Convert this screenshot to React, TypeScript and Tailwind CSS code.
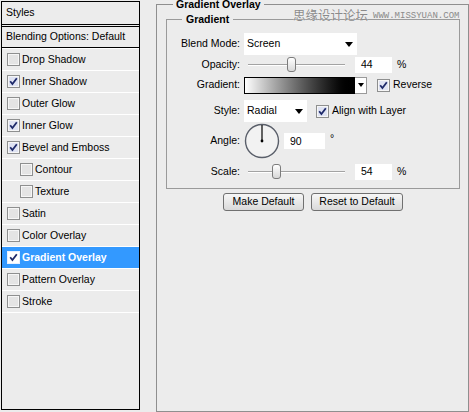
import React from "react";

const FONT = { fontFamily: '"Liberation Sans", Arial, sans-serif' };

interface BoxProps {
  checked?: boolean;
  active?: boolean;
}

function CheckBox({ checked, active }: BoxProps) {
  return (
    <svg width="13" height="13" viewBox="0 0 13 13" className="shrink-0">
      <rect x="0.5" y="0.5" width="12" height="12" fill={active ? "#ffffff" : "#f6f6f6"} stroke={active ? "#e8f0ff" : "#8e8f8f"} />
      <rect x="2" y="2" width="9" height="9" fill={active ? "#ffffff" : checked ? "#dfe3f3" : "#e4e4e4"} />
      {checked && <path d="M3.2 6.3 L5.4 9 L9.8 3.2" fill="none" stroke="#1e2a6b" strokeWidth="1.8" />}
    </svg>
  );
}

const items: { label: string; checked?: boolean; indent?: boolean; active?: boolean }[] = [
  { label: "Drop Shadow" },
  { label: "Inner Shadow", checked: true },
  { label: "Outer Glow" },
  { label: "Inner Glow", checked: true },
  { label: "Bevel and Emboss", checked: true },
  { label: "Contour", indent: true },
  { label: "Texture", indent: true },
  { label: "Satin" },
  { label: "Color Overlay" },
  { label: "Gradient Overlay", checked: true, active: true },
  { label: "Pattern Overlay" },
  { label: "Stroke" },
];

function Arrow() {
  return (
    <svg width="8" height="5" viewBox="0 0 8 5" className="shrink-0">
      <path d="M0 0 H8 L4 5 Z" fill="#000" />
    </svg>
  );
}

function Slider({ pos }: { pos: number }) {
  return (
    <div className="relative h-full w-[111px]">
      <div className="absolute left-[4px] right-[10px] top-[8px] h-[2px] border-t border-[#a3a3a3] border-b border-b-white" />
      <div
        className="absolute top-[1px] h-[15px] w-[9px] rounded-[3px] border border-[#7c7c7c] bg-gradient-to-b from-white to-[#d8d8d8]"
        style={{ left: pos }}
      />
    </div>
  );
}

function NumBox({ value, width = "w-[37px]" }: { value: string; width?: string }) {
  return <div className={`${width} flex h-[16px] items-center bg-white pl-[6px] pt-[1px]`}>{value}</div>;
}

function Row({ label, className, children }: { label: string; className: string; children: React.ReactNode }) {
  return (
    <div className={`flex items-center ${className}`}>
      <div className="w-[73px] text-right">{label}</div>
      <div className="ml-[4px] flex h-full items-center">{children}</div>
    </div>
  );
}

export default function App() {
  return (
    <div className="relative flex h-[412px] w-[469px] items-start overflow-hidden bg-[#ececec] text-[10.5px] text-black" style={FONT}>
      <div className="ml-[1px] mt-[1px] flex h-[409px] w-[139px] flex-col border border-black">
        <div className="flex h-[25px] items-center border-b-[3px] border-double border-black pl-[4px]">Styles</div>
        <div className="flex h-[21px] items-center border-b border-black pl-[4px]">Blending Options: Default</div>
        {items.map((it) => (
          <div
            key={it.label}
            className={`flex h-[22px] items-center gap-[2px] border-t border-white ${it.indent ? "pl-[18px]" : "pl-[5px]"} ${
              it.active ? "bg-[#3399ff] font-bold text-white" : ""
            }`}
          >
            <CheckBox checked={it.checked} active={it.active} />
            <span>{it.label}</span>
          </div>
        ))}
        <div className="border-t border-white" />
      </div>

      <fieldset className="ml-[16px] h-[412px] w-[313px] border border-[#8f8f8f]">
        <legend className="ml-[16px] px-[3px] font-bold leading-[8px]">Gradient Overlay</legend>
        <fieldset className="ml-[9px] mt-[6px] h-[175px] w-[294px] border border-[#9a9a9a]">
          <legend className="ml-[15px] px-[4px] font-bold leading-[10px]">Gradient</legend>
          <div className="flex flex-col pt-[9px]">
            <Row label="Blend Mode:" className="h-[22px]">
              <div className="flex h-[22px] w-[113px] items-center justify-between bg-white pl-[3px] pr-[4px]">
                <span>Screen</span>
                <Arrow />
              </div>
            </Row>
            <Row label="Opacity:" className="mt-[1px] h-[17px]">
              <Slider pos={43} />
              <NumBox value="44" />
              <span className="ml-[5px]">%</span>
            </Row>
            <Row label="Gradient:" className="mt-[3px] h-[18px]">
              <div className="h-[17px] w-[111px] border border-black bg-gradient-to-r from-white to-black" />
              <div className="flex h-[17px] w-[12px] items-center justify-center border border-l-0 border-[#9a9a9a] bg-white">
                <svg width="6" height="4" viewBox="0 0 6 4">
                  <path d="M0 0 H6 L3 4 Z" fill="#000" />
                </svg>
              </div>
              <div className="ml-[10px]">
                <CheckBox checked />
              </div>
              <span className="ml-[3px]">Reverse</span>
            </Row>
            <Row label="Style:" className="mt-[6px] h-[22px]">
              <div className="flex h-[22px] w-[63px] items-center justify-between bg-white pl-[3px] pr-[4px]">
                <span>Radial</span>
                <Arrow />
              </div>
              <div className="ml-[9px]">
                <CheckBox checked />
              </div>
              <span className="ml-[3px]">Align with Layer</span>
            </Row>
            <Row label="Angle:" className="mt-[1px] h-[36px]">
              <svg width="36" height="36" viewBox="0 0 36 36" className="shrink-0">
                <circle cx="18" cy="18" r="16.5" fill="#f2f2f2" stroke="#5a5f6a" strokeWidth="1.4" />
                <line x1="18" y1="18" x2="18" y2="2" stroke="#000" strokeWidth="1.2" />
                <circle cx="18" cy="18" r="1.4" fill="#000" />
              </svg>
              <div className="ml-[4px]">
                <NumBox value="90" width="w-[41px]" />
              </div>
              <span className="mb-[4px] ml-[5px]">°</span>
            </Row>
            <Row label="Scale:" className="mt-[4px] h-[17px]">
              <Slider pos={28} />
              <NumBox value="54" />
              <span className="ml-[5px]">%</span>
            </Row>
          </div>
        </fieldset>
        <div className="ml-[9px] mt-[4px] flex w-[294px] justify-center gap-[7px]">
          <button className="h-[18px] w-[81px] rounded-[3px] border border-[#707070] bg-gradient-to-b from-[#f7f7f7] to-[#d9d9d9]">
            Make Default
          </button>
          <button className="h-[18px] w-[92px] rounded-[3px] border border-[#707070] bg-gradient-to-b from-[#f7f7f7] to-[#d9d9d9]">
            Reset to Default
          </button>
        </div>
      </fieldset>

      <div className="absolute left-[293px] top-[8px] flex items-end gap-[5px]">
        <span
          className="text-[12.5px] leading-[14px] text-[#8a8a8a] [text-shadow:0_0_1px_#fff]"
          style={{ fontFamily: '"Noto Sans CJK SC", sans-serif' }}
        >
          思缘设计论坛
        </span>
        <span className="text-[9px] leading-[11px] text-[#8a8a8a]" style={{ fontFamily: '"Liberation Mono", monospace' }}>
          WWW.MISSYUAN.COM
        </span>
      </div>
    </div>
  );
}
